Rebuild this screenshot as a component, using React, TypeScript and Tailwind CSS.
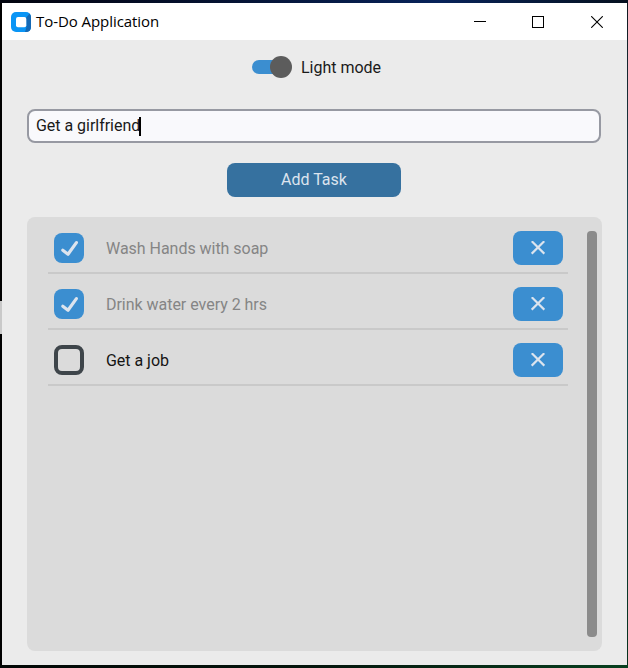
import React, { useState } from "react";

type Task = { id: number; title: string; done: boolean };

const initialTasks: Task[] = [
  { id: 1, title: "Wash Hands with soap", done: true },
  { id: 2, title: "Drink water every 2 hrs", done: true },
  { id: 3, title: "Get a job", done: false },
];

function AppLogo() {
  return (
    <svg className="h-5 w-5" viewBox="0 0 20 20">
      <rect width="20" height="20" rx="5" fill="#0a95f5" />
      <path d="M15 6 18.5 1.5Q20 3 20 5V15Q20 20 15 20H14L15.5 15Z" fill="#1468b4" />
      <rect x="5" y="5" width="10.3" height="10.3" rx="2" fill="#fff" />
    </svg>
  );
}

function TitleBar() {
  return (
    <header className="flex h-[37px] items-center bg-white pl-[9px] pr-[24px]">
      <AppLogo />
      <h1 className="ml-[5px] flex-1 whitespace-nowrap pb-[2px] font-['Open_Sans',sans-serif] text-[15px] leading-5 tracking-[-0.06px] text-black">
        To-Do Application
      </h1>
      <div className="flex">
        <svg className="mr-[46px] h-3 w-3" viewBox="0 0 12 12" shapeRendering="crispEdges">
          <path d="M0 5.5H12" stroke="#000" />
        </svg>
        <svg className="mr-[47px] h-3 w-3" viewBox="0 0 12 12" fill="none" shapeRendering="crispEdges">
          <rect x="0.5" y="0.5" width="11" height="11" stroke="#000" />
        </svg>
        <svg className="h-3 w-3" viewBox="0 0 12 12" fill="none">
          <path d="M0.2 0.2 11.8 11.8M11.8 0.2 0.2 11.8" stroke="#000" strokeWidth="1.1" />
        </svg>
      </div>
    </header>
  );
}

function ModeSwitch() {
  return (
    <div className="mt-[15px] flex h-6 items-center justify-center pl-[4px]">
      <span className="flex h-[14px] w-10 items-center justify-end rounded-full bg-gradient-to-r from-[#3b8ed0] from-80% to-transparent to-80%">
        <span className="h-[22px] w-[22px] shrink-0 rounded-full bg-[#5c5c5c]" />
      </span>
      <span className="ml-[9px] pt-[2px] text-[16px] leading-6 text-[#1a1a1a]">Light mode</span>
    </div>
  );
}

function Checkbox({ checked }: { checked: boolean }) {
  if (!checked) {
    return <span className="h-[30px] w-[30px] rounded-[8px] border-4 border-[#3e454a]" />;
  }
  return (
    <span className="h-[30px] w-[30px] rounded-[8px] bg-[#3b8ed0]">
      <svg className="h-[30px] w-[30px]" viewBox="0 0 30 30" fill="none">
        <path
          d="M8.8 17.2 14 21.2 22.4 9.6"
          stroke="#dce4ee"
          strokeWidth="3.2"
          strokeLinecap="round"
          strokeLinejoin="round"
        />
      </svg>
    </span>
  );
}

function TaskRow({ task, onToggle, onRemove }: { task: Task; onToggle: () => void; onRemove: () => void }) {
  return (
    <li className="flex h-14 items-center border-b-2 border-[#c9c9c9] pt-[13px] pr-[5px] pb-[7px] pl-[6px]">
      <button onClick={onToggle} className="flex">
        <Checkbox checked={task.done} />
      </button>
      <span
        className={`ml-[22px] flex-1 pt-[2px] text-[16px] leading-6 tracking-[-0.03px] ${task.done ? "text-[#858585]" : "text-[#141414]"}`}
      >
        {task.title}
      </span>
      <button
        onClick={onRemove}
        className="flex h-[34px] w-[50px] items-center justify-center rounded-[8px] bg-[#3b8ed0]"
      >
        <svg className="h-[14px] w-[14px]" viewBox="0 0 14 14" fill="none">
          <path d="M0.7 0.2 13.3 12.7M13.3 0.2 0.7 12.7" stroke="#dce4ee" strokeWidth="2.2" />
        </svg>
      </button>
    </li>
  );
}

export default function App() {
  const [tasks, setTasks] = useState<Task[]>(initialTasks);

  return (
    <div className="grid h-[668px] w-[628px] grid-cols-[2px_625px_1px] grid-rows-[3px_662px_3px] font-[Roboto,sans-serif]">
      <div className="col-span-3 bg-gradient-to-r from-[#02040e] via-[#07235a] via-70% to-[#05101f]" />
      <div className="bg-black pt-[298px]">
        <div className="h-[33px] bg-[#c9c9c9]" />
      </div>
      <main className="flex flex-col bg-[#ebebeb]">
        <TitleBar />
        <ModeSwitch />
        <div className="mt-[30px] ml-[25px] flex h-[34px] w-[574px] items-center rounded-[8px] border-2 border-[#9799a2] bg-[#f9f9fc] pl-[7px]">
          <span className="text-[16px] leading-6 tracking-[-0.03px] text-[#1a1a1a]">Get a girlfriend</span>
          <span className="-ml-[1.5px] h-[19px] w-[2px] bg-black" />
        </div>
        <button className="mt-5 ml-[225px] h-[34px] w-[174px] rounded-[8px] bg-[#36719f] text-[16px] leading-6 text-[#dce4ee]">
          Add Task
        </button>
        <section className="mt-5 ml-[25px] flex h-[434px] w-[575px] rounded-[8px] bg-[#dbdbdb] pt-px pl-[21px]">
          <ul className="w-[520px]">
            {tasks.map((task) => (
              <TaskRow
                key={task.id}
                task={task}
                onToggle={() => setTasks(tasks.map((t) => (t.id === task.id ? { ...t, done: !t.done } : t)))}
                onRemove={() => setTasks(tasks.filter((t) => t.id !== task.id))}
              />
            ))}
          </ul>
          <div className="mt-[13px] ml-[19px] h-[406px] w-[10px] rounded-[4px] bg-[#8b8b8b]" />
        </section>
      </main>
      <div className="bg-gradient-to-b from-[#101820] via-[#1c5560] via-40% to-[#06301c]" />
      <div className="col-span-3 bg-gradient-to-r from-[#020705] via-[#04150c] to-[#07401f]" />
    </div>
  );
}
